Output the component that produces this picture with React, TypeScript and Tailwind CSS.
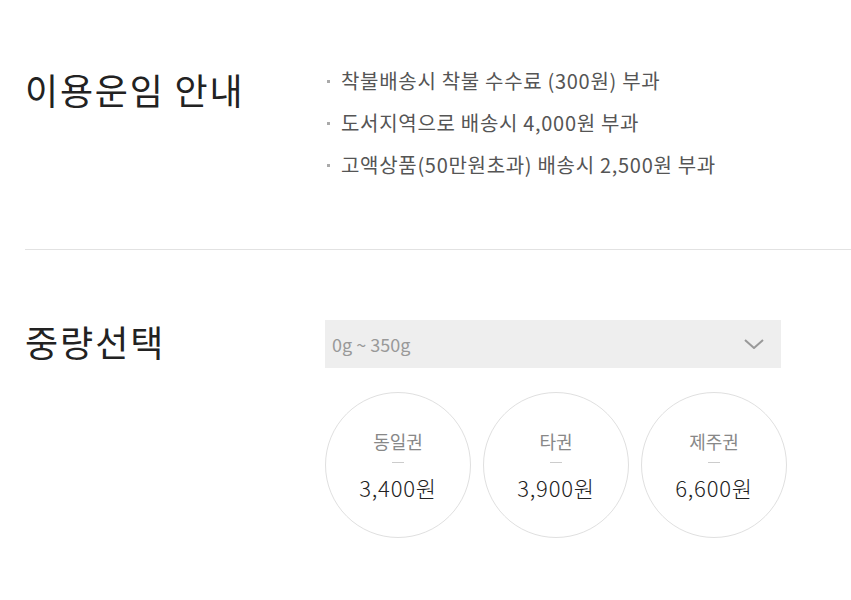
const notices = [
  "착불배송시 착불 수수료 (300원) 부과",
  "도서지역으로 배송시 4,000원 부과",
  "고액상품(50만원초과) 배송시 2,500원 부과",
];

const zones = [
  { name: "동일권", price: "3,400원" },
  { name: "타권", price: "3,900원" },
  { name: "제주권", price: "6,600원" },
];

export default function App() {
  return (
    <div className="min-h-[600px] w-[851px] bg-white pl-[25px] font-['Noto_Sans_CJK_KR',sans-serif] text-[#222]">
      <div className="flex border-b border-[#e2e2e2] pt-[64px] pb-[70px]">
        <h2 className="w-[300px] text-[36px] leading-[50px] tracking-[1.8px]">
          이용운임 안내
        </h2>
        <ul className="flex flex-col gap-[14px] pt-[3px]">
          {notices.map((n) => (
            <li
              key={n}
              className="flex items-center text-[20px] leading-[28px] tracking-[0.7px] text-[#555]"
            >
              <span className="mr-[11px] ml-[2px] h-[3px] w-[3px] bg-[#aaa]" />
              {n}
            </li>
          ))}
        </ul>
      </div>

      <div className="flex pt-[70px]">
        <h2 className="w-[300px] pt-[1px] text-[36px] leading-[40px] tracking-[2px]">
          중량선택
        </h2>
        <div className="flex flex-col gap-[24px]">
          <div className="flex h-[48px] w-[456px] items-center justify-between bg-[#eeeeee] pr-[17px] pl-[7px]">
            <span className="text-[18px] text-[#999]">0g ~ 350g</span>
            <svg width="20" height="10" viewBox="0 0 20 10" fill="none">
              <polyline
                points="1,1 10,9 19,1"
                stroke="#999"
                strokeWidth="2"
                strokeLinejoin="round"
              />
            </svg>
          </div>
          <div className="flex gap-[12px]">
            {zones.map((z) => (
              <div
                key={z.name}
                className="flex h-[146px] w-[146px] flex-col items-center justify-center rounded-full border border-[#e0e0e0]"
              >
                <span className="text-[18px] leading-[24px] text-[#888]">
                  {z.name}
                </span>
                <span className="mt-[9px] mb-[10px] h-px w-[12px] bg-[#ccc]" />
                <span className="text-[22px] leading-[28px] font-light tracking-[0.8px] text-[#222]">
                  {z.price}
                </span>
              </div>
            ))}
          </div>
        </div>
      </div>
    </div>
  );
}
